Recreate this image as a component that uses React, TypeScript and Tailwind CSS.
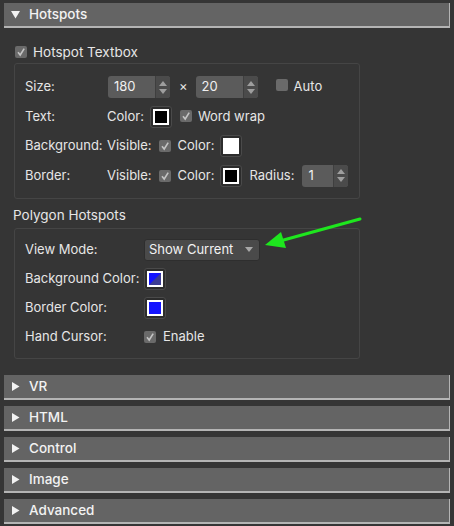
import React from 'react'

const font = { fontFamily: 'Inter, "Liberation Sans", sans-serif' }

function Check({ checked = true }: { checked?: boolean }) {
  return (
    <span className="inline-flex h-[12px] w-[12px] items-center justify-center rounded-[2px] bg-[#6a6a6a]">
      {checked && (
        <svg width="10" height="10" viewBox="0 0 10 10">
          <path d="M2 5.2 L4.2 8 L8.2 1.6" fill="none" stroke="#c4c4c4" strokeWidth="1.6" />
        </svg>
      )}
    </span>
  )
}

function Spin({ value, w }: { value: string; w: string }) {
  return (
    <div className={`flex h-[22px] ${w} overflow-hidden rounded-[3px] bg-[#5b5b5b]`}>
      <div className="flex flex-1 items-center pl-[6px] text-[13px] text-[#f0f0f0]">{value}</div>
      <div className="flex w-[15px] flex-col items-center justify-center gap-[3px] border-l border-[#3f3f3f] bg-[#4b4b4b]">
        <svg width="8" height="5" viewBox="0 0 8 5"><path d="M0 5 L4 0 L8 5 Z" fill="#9e9e9e" /></svg>
        <svg width="8" height="5" viewBox="0 0 8 5"><path d="M0 0 L4 5 L8 0 Z" fill="#9e9e9e" /></svg>
      </div>
    </div>
  )
}

function Swatch({ color, half }: { color: string; half?: string }) {
  return (
    <span className="inline-flex h-[22px] w-[22px] items-center justify-center rounded-[3px] border border-[#4a4a4a] bg-[#2c2c2c]">
      <span className="relative h-[16px] w-[16px] overflow-hidden border-2 border-white" style={{ background: color }}>
        {half && (
          <svg className="absolute inset-0" width="12" height="12" viewBox="0 0 12 12">
            <path d="M12 0 L12 12 L0 12 Z" fill={half} />
          </svg>
        )}
      </span>
    </span>
  )
}

function Bar({ label, open }: { label: string; open?: boolean }) {
  return (
    <div className="mx-[4px] flex h-[25px] items-center border-b-2 border-r border-[#b4b4b4] bg-[#646464] pl-[7px] text-[13.5px] font-medium text-[#f2f2f2]">
      <svg width="9" height="9" viewBox="0 0 9 9" className="mr-[9px]">
        {open ? <path d="M0 1 L9 1 L4.5 8.5 Z" fill="#f2f2f2" /> : <path d="M1 0 L8.5 4.5 L1 9 Z" fill="#f2f2f2" />}
      </svg>
      {label}
    </div>
  )
}

export default function App() {
  return (
    <div className="relative h-[526px] w-[454px] overflow-hidden bg-[#353535] pt-[3px] text-[13px] text-[#e6e6e6]" style={font}>
      <Bar label="Hotspots" open />

      <div className="mt-[14px] flex h-[20px] items-center gap-[6px] pl-[15px]">
        <Check />
        <span className="text-[13.5px]">Hotspot Textbox</span>
      </div>

      <div className="ml-[14px] mt-[1px] flex w-[346px] flex-col gap-[7.5px] rounded-[3px] border border-[#454545] pb-[11px] pl-[10px] pt-[12px]">
        <div className="flex h-[22px] items-center">
          <span className="w-[83px]">Size:</span>
          <Spin value="180" w="w-[62px]" />
          <span className="ml-[9px] mr-[8px]">×</span>
          <Spin value="20" w="w-[62px]" />
          <span className="ml-[18px] mr-[6px]"><Check checked={false} /></span>
          <span>Auto</span>
        </div>
        <div className="flex h-[22px] items-center">
          <span className="w-[82px]">Text:</span>
          <span className="mr-[6px]">Color:</span>
          <Swatch color="#000" />
          <span className="ml-[8px] mr-[6px]"><Check /></span>
          <span>Word wrap</span>
        </div>
        <div className="flex h-[22px] items-center">
          <span className="w-[82px]">Background:</span>
          <span className="mr-[7px]">Visible:</span>
          <Check />
          <span className="ml-[7px] mr-[6px]">Color:</span>
          <Swatch color="#fff" />
        </div>
        <div className="flex h-[22px] items-center">
          <span className="w-[82px]">Border:</span>
          <span className="mr-[7px]">Visible:</span>
          <Check />
          <span className="ml-[7px] mr-[6px]">Color:</span>
          <Swatch color="#000" />
          <span className="ml-[7px] mr-[8px]">Radius:</span>
          <Spin value="1" w="w-[46px]" />
        </div>
      </div>

      <div className="mt-[7px] flex h-[20px] items-center pl-[13px] text-[13.5px]">Polygon Hotspots</div>

      <div className="ml-[14px] mt-[2px] flex w-[346px] flex-col gap-[7px] rounded-[3px] border border-[#454545] pb-[10px] pl-[10px] pt-[10px]">
        <div className="flex h-[22px] items-center">
          <span className="w-[119px]">View Mode:</span>
          <div className="flex h-[22px] w-[116px] items-center justify-between rounded-[3px] border border-[#2e2e2e] bg-[#4a4a4a] pl-[4px] pr-[6px] text-[#f2f2f2]">
            <span>Show Current</span>
            <svg width="8" height="5" viewBox="0 0 8 5"><path d="M0 0 L8 0 L4 5 Z" fill="#a8a8a8" /></svg>
          </div>
        </div>
        <div className="flex h-[22px] items-center">
          <span className="w-[119px]">Background Color:</span>
          <Swatch color="#1414ff" half="#3c3c94" />
        </div>
        <div className="flex h-[22px] items-center">
          <span className="w-[119px]">Border Color:</span>
          <Swatch color="#1414ff" />
        </div>
        <div className="flex h-[22px] items-center">
          <span className="w-[119px]">Hand Cursor:</span>
          <Check />
          <span className="ml-[7px]">Enable</span>
        </div>
      </div>

      <div className="mt-[16px] flex flex-col gap-[6px]">
        <Bar label="VR" />
        <Bar label="HTML" />
        <Bar label="Control" />
        <Bar label="Image" />
        <Bar label="Advanced" />
      </div>

      <svg className="absolute left-[262px] top-[214px]" width="104" height="36" viewBox="0 0 104 36">
        <path d="M98 5 L18 27" stroke="#1ee61e" strokeWidth="3" strokeLinecap="round" />
        <path d="M3 31 L19 18 L24 34 Z" fill="#1ee61e" />
      </svg>
    </div>
  )
}
